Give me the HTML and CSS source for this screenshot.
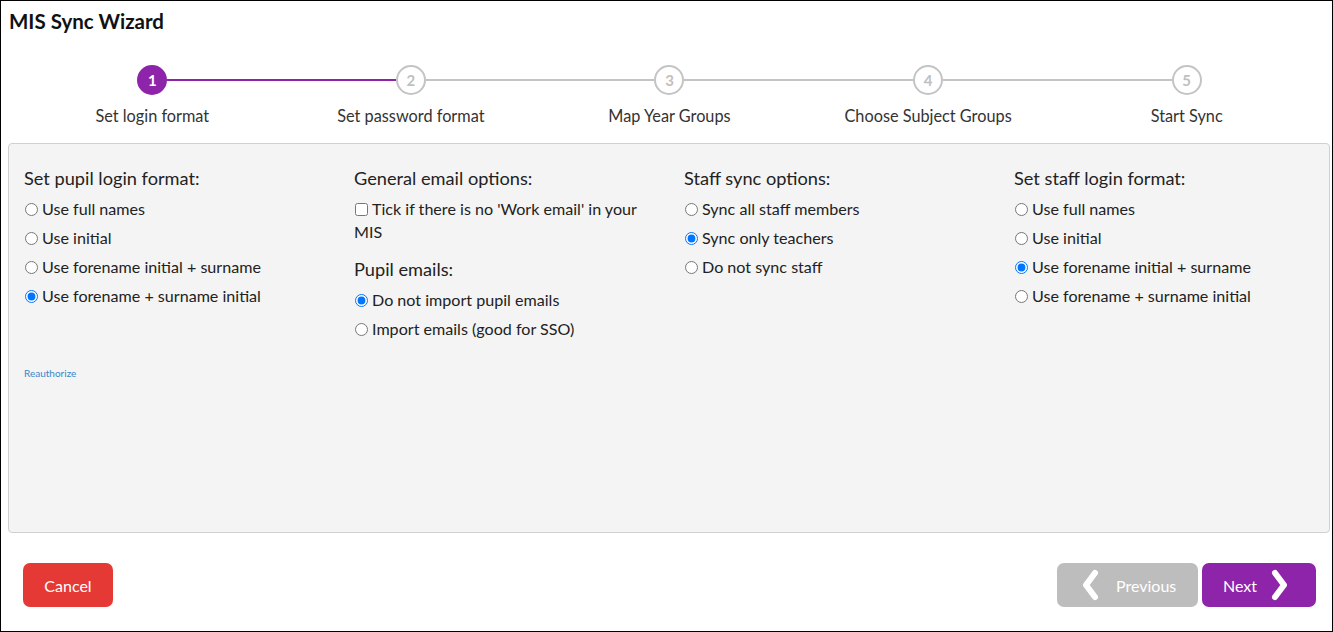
FILE: index.html
```html
<!DOCTYPE html>
<html>
<head>
<meta charset="utf-8">
<link rel="stylesheet" href="styles.css">
</head>
<body>
<div class="window">
  <h1 class="title">MIS Sync Wizard</h1>
  <ol class="stepper">
    <li class="step done-line active"><span class="dot">1</span><span class="label">Set login format</span></li>
    <li class="step"><span class="dot">2</span><span class="label">Set password format</span></li>
    <li class="step"><span class="dot">3</span><span class="label">Map Year Groups</span></li>
    <li class="step"><span class="dot">4</span><span class="label">Choose Subject Groups</span></li>
    <li class="step last"><span class="dot">5</span><span class="label">Start Sync</span></li>
  </ol>
  <div class="panel">
    <div class="cols">
      <div class="col">
        <h3 class="heading">Set pupil login format:</h3>
        <label class="opt"><input type="radio" name="pupil">Use full names</label>
        <label class="opt"><input type="radio" name="pupil">Use initial</label>
        <label class="opt"><input type="radio" name="pupil">Use forename initial + surname</label>
        <label class="opt"><input type="radio" name="pupil" checked>Use forename + surname initial</label>
      </div>
      <div class="col">
        <h3 class="heading">General email options:</h3>
        <label class="opt wrap"><input type="checkbox">Tick if there is no 'Work email' in your MIS</label>
        <h3 class="heading sub">Pupil emails:</h3>
        <label class="opt"><input type="radio" name="pemail" checked>Do not import pupil emails</label>
        <label class="opt"><input type="radio" name="pemail">Import emails (good for SSO)</label>
      </div>
      <div class="col">
        <h3 class="heading">Staff sync options:</h3>
        <label class="opt"><input type="radio" name="staff">Sync all staff members</label>
        <label class="opt"><input type="radio" name="staff" checked>Sync only teachers</label>
        <label class="opt"><input type="radio" name="staff">Do not sync staff</label>
      </div>
      <div class="col">
        <h3 class="heading">Set staff login format:</h3>
        <label class="opt"><input type="radio" name="sfmt">Use full names</label>
        <label class="opt"><input type="radio" name="sfmt">Use initial</label>
        <label class="opt"><input type="radio" name="sfmt" checked>Use forename initial + surname</label>
        <label class="opt"><input type="radio" name="sfmt">Use forename + surname initial</label>
      </div>
    </div>
    <a class="reauth" href="#">Reauthorize</a>
  </div>
  <div class="footer">
    <button class="btn cancel">Cancel</button>
    <div class="nav">
      <button class="btn prev"><svg class="chev" viewBox="0 0 18 32" width="18" height="32"><polyline points="14,4 5,16 14,28" fill="none" stroke="#fff" stroke-width="6" stroke-linecap="round" stroke-linejoin="round"/></svg>Previous</button>
      <button class="btn next">Next<svg class="chev" viewBox="0 0 18 32" width="18" height="32"><polyline points="4,4 13,16 4,28" fill="none" stroke="#fff" stroke-width="6" stroke-linecap="round" stroke-linejoin="round"/></svg></button>
    </div>
  </div>
</div>
</body>
</html>
```
FILE: styles.css
```css
* { box-sizing: border-box; }
html, body { margin: 0; padding: 0; }
body {
  font-family: "Lato", "Noto Sans", sans-serif;
  color: #222;
  background: #fff;
}
.window {
  width: 1333px;
  height: 632px;
  border: 1px solid #000;
  display: flex;
  flex-direction: column;
}
.title {
  margin: 0;
  padding: 8px 0 0 8px;
  font-size: 20.5px;
  line-height: 24px;
  font-weight: 700;
  color: #111;
}
.stepper {
  list-style: none;
  margin: 32px 16px 0 22px;
  padding: 0;
  display: grid;
  grid-template-columns: repeat(5, 1fr);
}
.step {
  position: relative;
  display: flex;
  flex-direction: column;
  align-items: center;
}
.step::after {
  content: "";
  position: absolute;
  top: 14px;
  left: calc(50% + 15px);
  width: calc(100% - 30px);
  height: 2px;
  background: #c4c4c4;
}
.step.active::after { background: #8e24aa; }
.step.last::after { display: none; }
.dot {
  width: 30px;
  height: 30px;
  border-radius: 50%;
  border: 2px solid #c4c4c4;
  background: #fff;
  color: #c0c0c0;
  font-weight: 700;
  font-size: 15px;
  display: flex;
  align-items: center;
  justify-content: center;
}
.step.active .dot {
  background: #8e24aa;
  border-color: #8e24aa;
  color: #fff;
}
.label {
  margin-top: 12px;
  font-size: 16.3px;
  line-height: 18px;
  color: #333;
}
.panel {
  margin: 18px 2px 0 7px;
  height: 390px;
  background: #f4f4f4;
  border: 1px solid #d0d0d0;
  border-radius: 4px;
  padding: 23px 0 0 0;
}
.cols {
  display: grid;
  grid-template-columns: repeat(4, 330px);
}
.col {
  padding: 0 15px;
  display: flex;
  flex-direction: column;
}
.heading {
  margin: 0 0 5px;
  font-size: 18.2px;
  line-height: 22px;
  font-weight: 400;
  color: #222;
}
.heading.sub { margin-top: 12px; }
.opt {
  display: flex;
  align-items: baseline;
  font-size: 16.1px;
  line-height: 29px;
  color: #222;
}
.opt input {
  margin: 0 4px 0 1px;
  width: 13px;
  height: 13px;
  position: relative;
  top: 1px;
}
.opt.wrap {
  display: block;
  line-height: 23px;
  padding-top: 3px;
  margin-bottom: 3px;
}
.reauth {
  display: block;
  width: max-content;
  line-height: 12px;
  margin: 24px 0 0 15px;
  font-size: 10px;
  color: #3a87c8;
  text-decoration: none;
}
.footer {
  display: flex;
  justify-content: space-between;
  align-items: center;
  margin: 30px 16px 0 22px;
}
.nav { display: flex; gap: 4px; }
.btn {
  height: 44px;
  border: none;
  border-radius: 7px;
  color: #fff;
  font-family: "Lato", "Noto Sans", sans-serif;
  font-size: 16px;
  display: flex;
  align-items: center;
  justify-content: center;
  padding: 0;
}
.cancel { width: 90px; background: #e53935; }
.prev { width: 141px; background: #bdbdbd; gap: 17px; justify-content: flex-start; padding-left: 24px; }
.next { width: 114px; background: #8e24aa; gap: 14px; justify-content: flex-start; padding-left: 21px; }
```
